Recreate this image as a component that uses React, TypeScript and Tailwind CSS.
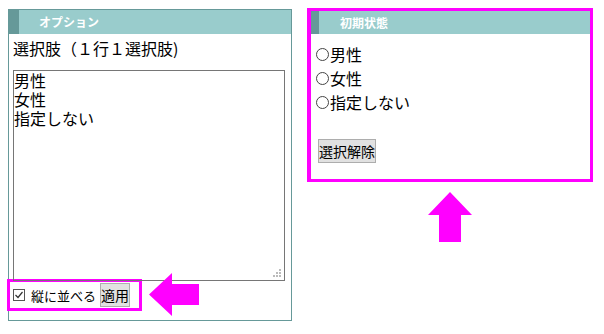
import React from "react";

const font = { fontFamily: '"Noto Sans CJK JP", "Noto Sans", sans-serif' };

function Grip() {
  return (
    <svg width="10" height="10" viewBox="0 0 10 10" className="absolute right-[2px] bottom-[2px]">
      <rect x="7" y="1" width="2" height="2" fill="#bbbbbb" />
      <rect x="4" y="4" width="2" height="2" fill="#bbbbbb" />
      <rect x="7" y="4" width="2" height="2" fill="#bbbbbb" />
      <rect x="1" y="7" width="2" height="2" fill="#bbbbbb" />
      <rect x="4" y="7" width="2" height="2" fill="#bbbbbb" />
      <rect x="7" y="7" width="2" height="2" fill="#bbbbbb" />
    </svg>
  );
}

function Radio({ label }: { label: string }) {
  return (
    <div className="flex items-center h-[24px] text-[16px] text-black">
      <span className="inline-block w-[13px] h-[13px] rounded-full border border-[#444] mr-[1px]" />
      <span>{label}</span>
    </div>
  );
}

export default function App() {
  return (
    <div className="w-[604px] h-[334px] bg-white flex items-start pl-[8px] pt-[8px] gap-[15px]" style={font}>
      {/* Left panel */}
      <div className="relative mt-[1px] w-[284px] border border-[#669999] flex flex-col pb-[12px]">
        <div className="flex h-[24px] bg-[#99cccc] items-center">
          <div className="w-[10px] h-full bg-[#669999]" />
          <span className="pl-[20px] text-[12px] font-bold text-white leading-none">オプション</span>
        </div>
        <div className="pl-[4px] pt-[3px] h-[25px] text-[16px] leading-[22px] text-black">選択肢（１行１選択肢)</div>
        <div className="relative ml-[4px] mt-[11px] w-[272px] h-[211px] border border-[#767676] text-[16px] leading-[19px] text-black whitespace-pre">
          {"男性\n女性\n指定しない"}
          <Grip />
        </div>
        <div className="ml-[1px] mt-[1px] w-[129px] h-[26px] flex items-center outline-[3px] outline-solid outline-[#ff00ff]">
          <svg width="12" height="12" viewBox="0 0 12 12" className="ml-[3px] shrink-0">
            <rect x="0.5" y="0.5" width="11" height="11" fill="white" stroke="#555" />
            <path d="M2.5 6 L5 8.5 L9.5 3" fill="none" stroke="#333" strokeWidth="1.2" />
          </svg>
          <span className="ml-[6px] text-[13px] leading-none text-black whitespace-nowrap">縦に並べる</span>
          <span className="ml-[4px] h-[24px] flex items-center justify-center bg-[#e1e1e1] border border-[#adadad] text-[14px] text-black leading-none whitespace-nowrap shrink-0">
            適用
          </span>
        </div>
        <svg width="50" height="43" viewBox="0 0 50 43" className="absolute left-[140px] top-[263px]">
          <polygon points="0,21.5 23,0 23,11 50,11 50,32 23,32 23,43" fill="#ff00ff" />
        </svg>
      </div>

      {/* Right column */}
      <div className="flex flex-col items-center w-[286px]">
        <div className="w-[286px] border-[3px] border-l-[4px] border-[#ff00ff] flex flex-col pb-[16px]">
          <div className="flex h-[23px] bg-[#99cccc] items-center">
            <div className="w-[8px] h-full bg-[#669999]" />
            <span className="pl-[21px] text-[12px] font-bold text-white leading-none">初期状態</span>
          </div>
          <div className="pl-[5px] pt-[8px] flex flex-col">
            <Radio label="男性" />
            <Radio label="女性" />
            <Radio label="指定しない" />
          </div>
          <div className="pl-[7px] mt-[25px] flex">
            <span className="inline-flex h-[24px] items-center justify-center bg-[#e1e1e1] border border-[#adadad] text-[14px] text-black leading-none whitespace-nowrap">
              選択解除
            </span>
          </div>
        </div>
        <svg width="44" height="50" viewBox="0 0 44 50" className="mt-[10px]">
          <polygon points="22,0 44,23 33,23 33,50 11,50 11,23 0,23" fill="#ff00ff" />
        </svg>
      </div>
    </div>
  );
}
